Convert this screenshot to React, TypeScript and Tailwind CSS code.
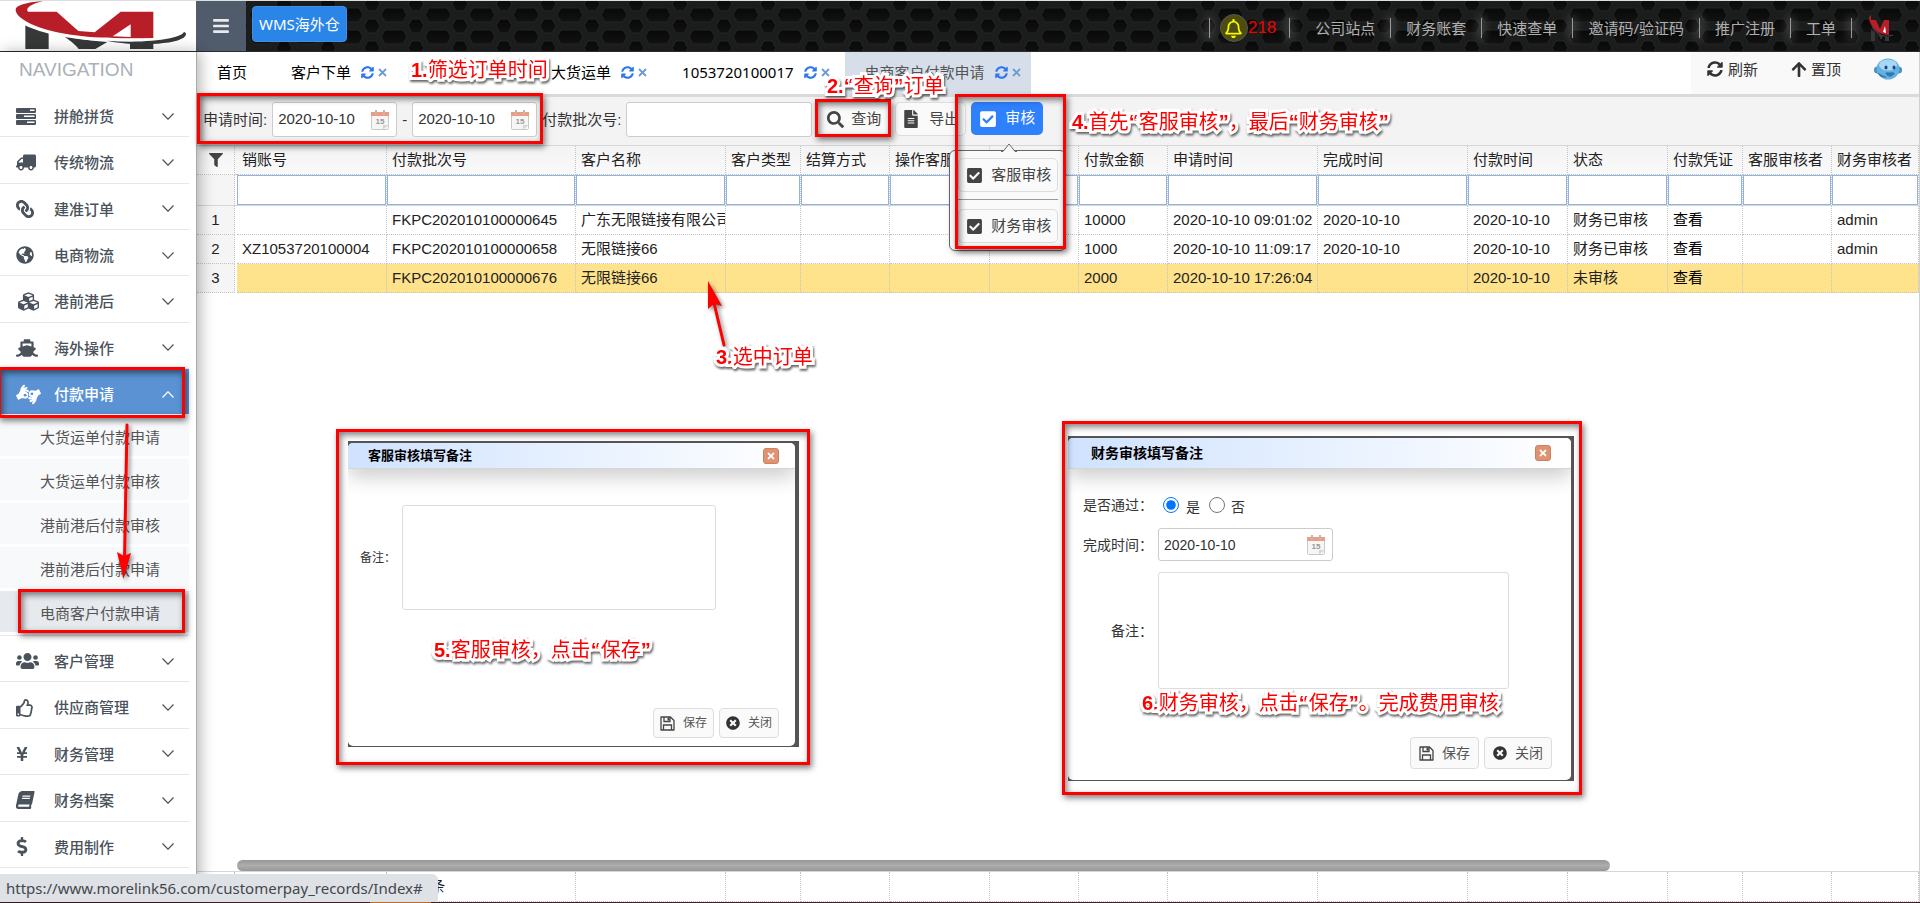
import React from "react";
import type { IconType } from "react-icons";
import {
  FaAmericanSignLanguageInterpreting,
  FaArrowUp,
  FaBars,
  FaBook,
  FaCheckSquare,
  FaCubes,
  FaDollarSign,
  FaFileAlt,
  FaFilter,
  FaGlobeAmericas,
  FaLink,
  FaRegBell,
  FaRegThumbsUp,
  FaSearch,
  FaShip,
  FaSyncAlt,
  FaTimes,
  FaTimesCircle,
  FaTruck,
  FaUsers,
  FaYenSign,
} from "react-icons/fa";

type MenuItem = { label: string; icon: IconType | typeof TasksIcon; iconClass?: string };

function TasksIcon({ className }: { className?: string }) {
  return (
    <svg viewBox="0 0 20 17" className={className} fill="currentColor" aria-hidden="true">
      <path d="M1 0h18a1 1 0 0 1 1 1v3a1 1 0 0 1-1 1H1a1 1 0 0 1-1-1V1a1 1 0 0 1 1-1zm13 1.500v1.500h4.500V1.500z" fillRule="evenodd" />
      <path d="M1 6h18a1 1 0 0 1 1 1v3a1 1 0 0 1-1 1H1a1 1 0 0 1-1-1V7a1 1 0 0 1 1-1zm7 1.500v1.500h10.500V7.500z" fillRule="evenodd" />
      <path d="M1 12h18a1 1 0 0 1 1 1v3a1 1 0 0 1-1 1H1a1 1 0 0 1-1-1v-3a1 1 0 0 1 1-1zm10 1.500v1.500h7.500v-1.500z" fillRule="evenodd" />
    </svg>
  );
}

function FloppyIcon({ className }: { className?: string }) {
  return (
    <svg viewBox="0 0 15 15" className={className} fill="none" stroke="currentColor" strokeWidth="1.300" aria-hidden="true">
      <path d="M1 1h9.500L14 4.500V14H1z" strokeLinejoin="round" />
      <path d="M3.500 14V9h8v5" />
      <path d="M4 1v4.500h6V1" />
      <path d="M7.500 1.500h2v3h-2z" fill="currentColor" stroke="none" />
    </svg>
  );
}

const menuTop: MenuItem[] = [
  { label: "拼舱拼货", icon: TasksIcon, iconClass: "w-5 h-[17px]" },
  { label: "传统物流", icon: FaTruck, iconClass: "w-5 h-[17px] -scale-x-100" },
  { label: "建准订单", icon: FaLink, iconClass: "w-[18px] h-[18px] -scale-x-100" },
  { label: "电商物流", icon: FaGlobeAmericas, iconClass: "w-[18px] h-[18px]" },
  { label: "港前港后", icon: FaCubes, iconClass: "w-[25px] h-[21px]" },
  { label: "海外操作", icon: FaShip, iconClass: "w-[22px] h-5" },
];

const subMenu = ["大货运单付款申请", "大货运单付款审核", "港前港后付款审核", "港前港后付款申请", "电商客户付款申请"];

const menuBottom: MenuItem[] = [
  { label: "客户管理", icon: FaUsers, iconClass: "w-[23px] h-5" },
  { label: "供应商管理", icon: FaRegThumbsUp, iconClass: "w-[18px] h-[18px]" },
  { label: "财务管理", icon: FaYenSign, iconClass: "w-3 h-4" },
  { label: "财务档案", icon: FaBook, iconClass: "w-[18px] h-[18px] -skew-x-12" },
  { label: "费用制作", icon: FaDollarSign, iconClass: "w-3 h-[19px]" },
];

const columns = [
  { title: "销账号", width: "w-[150px]" },
  { title: "付款批次号", width: "w-[189px]" },
  { title: "客户名称", width: "w-[150px]" },
  { title: "客户类型", width: "w-[75px]" },
  { title: "结算方式", width: "w-[89px]" },
  { title: "操作客服", width: "w-[100px]" },
  { title: "", width: "w-[89px]" },
  { title: "付款金额", width: "w-[89px]" },
  { title: "申请时间", width: "w-[150px]" },
  { title: "完成时间", width: "w-[150px]" },
  { title: "付款时间", width: "w-[100px]" },
  { title: "状态", width: "w-[100px]" },
  { title: "付款凭证", width: "w-[75px]" },
  { title: "客服审核者", width: "w-[89px]" },
  { title: "财务审核者", width: "w-[87px]" },
];

const rows = [
  ["", "FKPC202010100000645", "广东无限链接有限公司", "", "", "", "", "10000", "2020-10-10 09:01:02", "2020-10-10", "2020-10-10", "财务已审核", "查看", "", "admin"],
  ["XZ1053720100004", "FKPC202010100000658", "无限链接66", "", "", "", "", "1000", "2020-10-10 11:09:17", "2020-10-10", "2020-10-10", "财务已审核", "查看", "", "admin"],
  ["", "FKPC202010100000676", "无限链接66", "", "", "", "", "2000", "2020-10-10 17:26:04", "", "2020-10-10", "未审核", "查看", "", ""],
];

function Chevron({ up = false }: { up?: boolean }) {
  return (
    <svg viewBox="0 0 12 7" className="h-[7px] w-3" fill="none" stroke="currentColor" strokeWidth="1.200" aria-hidden="true">
      <path d={up ? "M0.500 6.500 6 0.800l5.500 5.700" : "M0.500 0.500 6 6.200 11.500 0.500"} />
    </svg>
  );
}

function Logo() {
  return (
    <svg viewBox="0 0 588 153" className="h-[51px] w-[196px]" role="img" aria-label="Morelink">
      <path d="M130 0C90 3 50 10 47 25c-2 16 22 34 55 48 70 30 180 40 298 39h60V32h-98l-78 62-49-4-65-58H84C76 22 90 10 130 0z" fill="#b81e28" />
      <path d="M338 106l54-36v38z" fill="#fff" />
      <path d="M76 68l70 26v50H76zM186 102c45 12 90 18 136 21l-36 21h-50c-14-18-30-28-50-42zM390 125l70-1v20h-70z" fill="#373939" />
      <path d="M60 62c80 42 190 58 340 55 70 0 120-6 146-20" fill="none" stroke="#fff" strokeWidth="8" />
      <path d="M320 119c70 6 140 3 190-7 26-6 38-12 42-19 6 2 8 6 4 12-10 14-50 22-100 24-50 2-100-2-136-10z" fill="#373939" />
    </svg>
  );
}

function HexBackground() {
  return (
    <svg className="absolute inset-0 h-full w-full" aria-hidden="true">
      <defs>
        <linearGradient id="hexFill" x1="0" y1="0" x2="0" y2="1">
          <stop offset="0" stopColor="#070807" />
          <stop offset="1" stopColor="#111211" />
        </linearGradient>
        <pattern id="hex" width="44" height="22" patternUnits="userSpaceOnUse">
          <rect width="44" height="22" fill="#1b1c1c" />
          <g fill="url(#hexFill)" stroke="#222323" strokeWidth="1">
            <path d="M9 14l4-7h18l4 7-4 7H13z" />
            <path d="M-8 3l4-7h8l4 7-4 7h-8z" />
            <path d="M36 3l4-7h8l4 7-4 7h-8z" />
            <path d="M-8 25l4-7h8l4 7-4 7h-8z" />
            <path d="M36 25l4-7h8l4 7-4 7h-8z" />
          </g>
        </pattern>
      </defs>
      <rect width="100%" height="100%" fill="url(#hex)" />
    </svg>
  );
}

function CalendarIcon() {
  return (
    <svg viewBox="0 0 18 20" className="h-5 w-[18px] shrink-0" aria-hidden="true">
      <rect x="0.500" y="2.500" width="17" height="17" rx="1" fill="#f6f6f6" stroke="#c9c9c9" />
      <path d="M0 2h18v4H0z" fill="#f09a80" />
      <path d="M4 0h2v5H4zM12 0h2v5h-2z" fill="#b9b9b9" />
      <path d="M12 19.500V15h5.500z" fill="#d5d5d5" />
      <text x="9" y="14" textAnchor="middle" fontSize="8" fontWeight="bold" fontFamily="Liberation Sans" fill="#999">15</text>
    </svg>
  );
}

function DateField({ label, className }: { label: string; className: string }) {
  return (
    <span className={`flex items-center rounded-[3px] border border-[#ccc] bg-white pr-[7px] pl-[5px] ${className}`}>
      <input aria-label={label} defaultValue="2020-10-10" className="w-full min-w-0 text-[#333] outline-none" />
      <CalendarIcon />
    </span>
  );
}

function SideItem({ item }: { item: MenuItem }) {
  const Icon = item.icon;
  return (
    <li className="flex border-b border-[#e4e8eb]">
      <a href="#" className="flex flex-1 items-center pt-[5px] pr-[15px] pl-4 font-medium">
        <span className="flex w-[38px] items-center">
          <Icon className={item.iconClass} />
        </span>
        <span className="flex-1">{item.label}</span>
        <Chevron />
      </a>
    </li>
  );
}

function Sidebar() {
  return (
    <nav className="z-10 flex w-[197px] shrink-0 flex-col overflow-hidden border-r border-[#aaa] bg-white pr-[7px] text-[15px] text-[#4a525b] shadow-[3px_0_14px_rgba(0,0,0,0.3)]">
      <h2 className="h-[39px] pt-1 pl-[19px] font-['Liberation_Sans'] text-[19px] text-[#a9b0b8]">NAVIGATION</h2>
      <ul className="grid h-[278px] shrink-0 auto-rows-fr">
        {menuTop.map((m) => (
          <SideItem key={m.label} item={m} />
        ))}
      </ul>
      <a href="#" className="flex h-[45px] shrink-0 items-center bg-[#5a92d3] pt-1.5 pr-[15px] pl-4 font-medium text-white">
        <span className="flex w-[38px]">
          <FaAmericanSignLanguageInterpreting className="h-[21px] w-[25px]" />
        </span>
        <span className="flex-1">付款申请</span>
        <Chevron up />
      </a>
      <ul className="grid h-[222px] shrink-0 auto-rows-fr border-b border-[#e4e8eb] pt-px text-[#555]">
        {subMenu.map((s, i) => (
          <li key={s} className="flex pb-[3px]">
            <a href="#" className={`flex flex-1 items-center pt-1 pl-10 ${i === 4 ? "bg-[#e6e9ed]" : "bg-[#f7f9fb]"}`}>
              {s}
            </a>
          </li>
        ))}
      </ul>
      <ul className="grid h-[232px] shrink-0 auto-rows-fr">
        {menuBottom.map((m) => (
          <SideItem key={m.label} item={m} />
        ))}
      </ul>
    </nav>
  );
}

function HeaderLink({ children }: { children: React.ReactNode }) {
  return (
    <a href="#" className="px-[15px]">
      {children}
    </a>
  );
}

function Divider() {
  return <span className="h-5 w-px bg-[#999] shadow-[0_0_10px_2px_rgba(255,255,255,0.25)]" />;
}

function Header() {
  return (
    <header className="flex h-[52px] shrink-0 border-t border-b border-t-[#dcdfe0] border-b-[#2b2b2b]">
      <div className="w-[196px] shrink-0 bg-white">
        <Logo />
      </div>
      <div className="relative flex flex-1 bg-[#151616]">
        <HexBackground />
        <button aria-label="菜单" className="relative flex w-[50px] items-center justify-center bg-[#505b6c] text-[#e8eaec]">
          <FaBars className="h-[18px] w-[18px]" />
        </button>
        <button className="relative mt-[5px] ml-1.5 h-9 rounded border border-[#3f8fe6] bg-[#2a85e8] px-1.5 text-[15px] text-white">WMS海外仓</button>
        <div className="relative ml-auto flex items-center pt-1 pr-[26px] text-[15px] text-[#b0b0b0]">
          <Divider />
          <a href="#" className="ml-2.5 flex items-center pr-[13px] font-['Liberation_Sans'] text-[17px] text-[#f00000]">
            <span className="flex h-7 w-7 items-center justify-center rounded-full border border-[#555] bg-[#4d4d12]">
              <FaRegBell className="h-[19px] w-[19px] text-[#f8f800]" />
            </span>
            218
          </a>
          <Divider />
          <span className="pl-2.5"><HeaderLink>公司站点</HeaderLink></span>
          <Divider />
          <HeaderLink>财务账套</HeaderLink>
          <Divider />
          <HeaderLink>快速查单</HeaderLink>
          <Divider />
          <HeaderLink>邀请码/验证码</HeaderLink>
          <Divider />
          <HeaderLink>推广注册</HeaderLink>
          <Divider />
          <HeaderLink>工单</HeaderLink>
          <Divider />
          <svg viewBox="0 0 26 28" className="ml-4 h-7 w-[26px]" aria-hidden="true">
            <path d="M3 1C0 3 1 7 4 12c3 5 9 9 17 9V6h-5l-4 9L8 6H3z" fill="#b81e28" />
            <path d="M15 18l2-6 1 7z" fill="#fff" />
            <path d="M3 15l4 4v8H3zM10 20l5 2-2 4zM17 23h4v4h-4z" fill="#363838" />
            <path d="M4 13c5 8 13 11 21 8" fill="none" stroke="#444" />
          </svg>
        </div>
      </div>
    </header>
  );
}

function Tab({ label, active = false }: { label: string; active?: boolean }) {
  return (
    <div className={`flex items-center pr-2.5 pb-0.5 pl-5 ${active ? "bg-[#d6dfe9] text-[#555]" : "mr-[5px]"}`}>
      <a href="#">{label}</a>
      <button aria-label="刷新标签" className="ml-2.5 text-[#2f74f0]">
        <FaSyncAlt className="h-[13px] w-[13px]" />
      </button>
      <button aria-label="关闭标签" className="ml-1 text-[#6f9bd0]">
        <svg viewBox="0 0 9 9" className="h-[9px] w-[9px]" stroke="currentColor" strokeWidth="1.800"><path d="M1 1l7 7M8 1L1 8" /></svg>
      </button>
    </div>
  );
}

function Tabs() {
  return (
    <div className="flex h-[45px] shrink-0 border-b-[3px] border-[#dadada] bg-white text-[15px] text-black">
      <a href="#" className="flex items-center pr-6 pb-0.5 pl-5">首页</a>
      <Tab label="客户下单" />
      <span className="w-[129px]" />
      <Tab label="大货运单" />
      <Tab label="1053720100017" />
      <Tab label="电商客户付款申请" active />
      <div className="ml-auto flex items-center bg-[#f9f9f9] pr-[17px] pb-2 pl-4 text-[#333]">
        <button className="flex items-center gap-[5px]"><FaSyncAlt className="h-4 w-4" />刷新</button>
        <button className="ml-[33px] flex items-center gap-1"><FaArrowUp className="h-[17px] w-4" />置顶</button>
        <svg viewBox="0 0 28 22" className="ml-[33px] h-[22px] w-7" aria-hidden="true">
          <circle cx="3.500" cy="12" r="3.500" fill="#3f8fc4" />
          <circle cx="24.500" cy="12" r="3.500" fill="#3f8fc4" />
          <ellipse cx="14" cy="11" rx="11.500" ry="10.500" fill="#64b1df" />
          <ellipse cx="14" cy="7" rx="9" ry="5.500" fill="#a6d8f3" />
          <ellipse cx="12" cy="9.500" rx="1.500" ry="2" fill="#243f94" />
          <ellipse cx="20" cy="9.500" rx="1.500" ry="2" fill="#243f94" />
          <path d="M12 15h8c-1 4-7 4-8 0zM4 15c2 3 5 4 8 4" fill="#2c7fb5" stroke="#276f9f" />
        </svg>
      </div>
    </div>
  );
}

const toolButton = "flex h-[34px] items-center rounded-[5px] border border-[#ddd] bg-[#fafafa] text-[#444]";

function Toolbar() {
  return (
    <div className="flex h-[49px] shrink-0 items-start gap-[5px] border-b border-[#d6d6d6] bg-[#f3f3f3] pt-[5px] pl-1.5 text-[15px] text-[#333]">
      <span className="leading-[35px]">申请时间:</span>
      <DateField label="开始时间" className="h-[35px] w-[125px]" />
      <span className="leading-[35px]">-</span>
      <DateField label="结束时间" className="h-[35px] w-[125px]" />
      <label htmlFor="batch" className="leading-[35px]">付款批次号:</label>
      <input id="batch" className="h-[35px] w-[186px] rounded-[3px] border border-[#ccc] bg-white px-1" />
      <button className={`${toolButton} w-[73px] pl-[9px]`}>
        <FaSearch className="mr-[7px] h-[17px] w-[17px]" />查询
      </button>
      <button className={`${toolButton} w-[71px] overflow-hidden pl-[7px]`}>
        <FaFileAlt className="mr-2.5 h-[18px] w-4 shrink-0" /><span className="whitespace-nowrap">导出</span>
      </button>
      <div className="relative">
        <button className="flex h-[33px] w-[72px] items-center rounded-[5px] bg-[#2e80fd] pl-2 text-white">
          <FaCheckSquare className="mr-2 h-[18px] w-[18px]" />审核
        </button>
        <div className="absolute top-12 -left-[22px] z-20 w-[117px] rounded-md border border-[#666] bg-[#fafafa] py-[7px] pr-[7px] pl-2 shadow-md">
          <svg viewBox="0 0 16 9" className="absolute -top-2 left-[51px] h-[9px] w-4" aria-hidden="true">
            <path d="M0 8.500h2L8 1l6 7.500h2" fill="#f6f6f6" stroke="#666" />
          </svg>
          <button className={`${toolButton} w-full pl-[7px]`}>
            <FaCheckSquare className="mr-2 h-[17px] w-[17px]" />客服审核
          </button>
          <hr className="mt-[7px] mb-[9px] border-[#999]" />
          <button className={`${toolButton} w-full pl-[7px]`}>
            <FaCheckSquare className="mr-2 h-[17px] w-[17px]" />财务审核
          </button>
        </div>
      </div>
    </div>
  );
}

function ColGroup() {
  return (
    <colgroup>
      <col className="w-[38px]" />
      <col className="w-[2px]" />
      {columns.map((c, i) => (
        <col key={i} className={c.width} />
      ))}
    </colgroup>
  );
}

function Grid() {
  return (
    <>
      <table className="w-full table-fixed border-separate border-spacing-0 text-[15px] text-[#222]">
        <ColGroup />
        <thead>
          <tr className="h-[29px] bg-gradient-to-b from-[#f3f3f3] to-[#fafafa]">
            <th className="border-r border-b border-dotted border-[#c4c4c4] p-0">
              <FaFilter className="mx-auto h-3.5 w-3.5 text-[#444]" />
            </th>
            <th className="border-b border-dotted border-[#c4c4c4] p-0" />
            {columns.map((c, i) => (
              <th key={i} className="border-r border-b border-dotted border-[#c4c4c4] p-0 pl-[5px] text-left font-normal whitespace-nowrap">
                {c.title}
              </th>
            ))}
          </tr>
          <tr className="h-[31px]">
            <td className="border-r border-b border-r-[#c4c4c4] border-b-[#d6d6d6] bg-[#f5f5f5] p-0 [border-right-style:dotted]" />
            <td className="border-b border-[#d6d6d6] p-0" />
            {columns.map((c, i) => (
              <td key={i} className="border-r border-b border-r-[#c4c4c4] border-b-[#d6d6d6] p-0 [border-right-style:dotted]">
                <input aria-label={`筛选${c.title}`} className="block h-[30px] w-full border border-[#8fb4e2] bg-white px-1" />
              </td>
            ))}
          </tr>
        </thead>
        <tbody>
          {rows.map((r, ri) => (
            <tr key={ri} className="h-[29px]">
              <th className="border-r border-b border-dotted border-[#c4c4c4] bg-[#f5f5f5] p-0 font-normal">{ri + 1}</th>
              <td className="p-0" />
              {r.map((v, i) => (
                <td
                  key={i}
                  className={`overflow-hidden border-r border-b border-dotted border-[#c4c4c4] p-0 pl-[5px] whitespace-nowrap ${ri === 2 ? "bg-[#ffe28c]" : "bg-white"}`}
                >
                  {i === 12 ? <a href="#" className="text-black">{v}</a> : v}
                </td>
              ))}
            </tr>
          ))}
        </tbody>
      </table>
      <div className="flex-1" />
      <div className="flex pl-10">
        <div className="h-[11px] max-w-[1373px] flex-1 rounded-md bg-gradient-to-b from-[#979797] via-[#adadad] to-[#979797]" />
      </div>
      <table className="w-full table-fixed border-separate border-spacing-0 border-t border-[#d6d6d6] text-[15px] text-[#222]">
        <ColGroup />
        <tbody>
          <tr className="h-[30px]">
            <td className="border-r border-b border-dotted border-[#c4c4c4] p-0" />
            <td className="border-b border-dotted border-[#c4c4c4] p-0" />
            {columns.map((_, i) => (
              <td key={i} className="border-r border-b border-dotted border-[#c4c4c4] p-0 pl-[5px] whitespace-nowrap">
                {i === 1 ? "总共3条" : ""}
              </td>
            ))}
          </tr>
        </tbody>
      </table>
    </>
  );
}

const frame = "pointer-events-none absolute z-30 border-3 border-[#ff0000] shadow-[2px_3px_6px_rgba(0,0,0,0.5),inset_2px_3px_6px_rgba(0,0,0,0.5)]";

function Note({ text, className }: { text: string; className: string }) {
  const parts = text.match(/[“”0-9.]+|[^“”0-9.]+/g) ?? [];
  return (
    <p className={`pointer-events-none absolute z-40 whitespace-nowrap leading-6 text-[#ff0000] [-webkit-text-stroke:6px_white] [paint-order:stroke_fill] [stroke-linejoin:round] drop-shadow-[1px_2px_1px_rgba(0,0,0,0.6)] ${className}`}>
      {parts.map((p, i) => (
        <span key={i} className={/[“”0-9.]/.test(p) ? "font-bold" : "font-normal"}>{p}</span>
      ))}
    </p>
  );
}

function DialogButtons({ className }: { className: string }) {
  const cls = "flex items-center gap-2 rounded border border-[#ddd] bg-[#fafafa] text-[#555]";
  return (
    <>
      <button className={`${cls} ${className}`}><FloppyIcon className="h-[15px] w-[15px] text-[#444]" />保存</button>
      <button className={`${cls} ${className}`}><FaTimesCircle className="h-3.5 w-3.5 text-[#333]" />关闭</button>
    </>
  );
}

function DialogHeader({ title, className }: { title: string; className: string }) {
  return (
    <div className={`flex shrink-0 items-center justify-between border-b border-[#d5d5d5] bg-gradient-to-r from-[#cfe2ff] to-white font-bold text-black shadow-[0_8px_20px_rgba(0,0,0,0.2)] ${className}`}>
      <h3>{title}</h3>
      <button aria-label="关闭" className="flex h-4 w-4 items-center justify-center rounded-[3px] border border-[#cf7f60] bg-[#df9372] text-white">
        <FaTimes className="h-2.5 w-2.5" />
      </button>
    </div>
  );
}

function ServiceDialog() {
  return (
    <section className="absolute top-[441px] left-[348px] flex h-[306px] w-[451px] bg-[#555] pt-0.5 pr-1 pb-px">
      <div className="flex flex-1 flex-col overflow-hidden rounded-[5px] bg-white text-xs text-[#333]">
        <DialogHeader title="客服审核填写备注" className="h-[26px] pr-4 pl-5 text-[13px]" />
        <div className="mt-9 flex items-center pl-3">
          <label htmlFor="remark1" className="w-[42px]">备注：</label>
          <textarea id="remark1" className="h-[105px] w-[314px] resize-none rounded-[3px] border border-[#ddd]" />
        </div>
        <div className="mt-auto mr-4 mb-2 flex h-[30px] justify-end gap-[5px]">
          <DialogButtons className="px-1.5" />
        </div>
      </div>
    </section>
  );
}

function FinanceDialog() {
  return (
    <section className="absolute top-[436px] left-[1068px] flex h-[345px] w-[506px] bg-[#555] pt-0.5 pr-[3px] pb-px">
      <div className="flex flex-1 flex-col overflow-hidden rounded-[5px] bg-white text-sm text-[#333]">
        <DialogHeader title="财务审核填写备注" className="h-[31px] pr-5 pl-[23px]" />
        <div className="mt-6 flex h-6 items-center pl-[15px]">
          <span className="w-20">是否通过：</span>
          <input id="pass-yes" name="pass" type="radio" defaultChecked className="h-4 w-4" />
          <label htmlFor="pass-yes" className="mt-1 mr-[9px] ml-[7px]">是</label>
          <input id="pass-no" name="pass" type="radio" className="h-4 w-4" />
          <label htmlFor="pass-no" className="mt-1 ml-1.5">否</label>
        </div>
        <div className="mt-[11px] flex items-center pl-[15px]">
          <span className="w-[75px]">完成时间：</span>
          <DateField label="完成时间" className="h-[33px] w-[175px]" />
        </div>
        <div className="mt-[11px] flex items-center pl-[15px]">
          <label htmlFor="remark2" className="w-[75px] pl-7 whitespace-nowrap">备注：</label>
          <textarea id="remark2" className="h-[117px] w-[351px] resize-none rounded-[3px] border border-[#ddd]" />
        </div>
        <div className="mt-auto mr-[19px] mb-[11px] flex h-8 justify-end gap-[5px]">
          <DialogButtons className="px-2" />
        </div>
      </div>
    </section>
  );
}

export default function App() {
  return (
    <div className="relative flex h-screen flex-col overflow-hidden bg-white font-['Noto_Sans','Noto_Sans_CJK_SC',sans-serif]">
      <Header />
      <div className="flex min-h-0 flex-1 border-b border-[#3a2028]">
        <Sidebar />
        <main className="flex min-w-0 flex-1 flex-col border-r border-[#d0d0d0] font-['Liberation_Sans','Noto_Sans_CJK_SC',sans-serif]">
          <div className="flex flex-col font-['Noto_Sans','Noto_Sans_CJK_SC',sans-serif]">
            <Tabs />
          </div>
          <Toolbar />
          <Grid />
        </main>
      </div>

      <div className="absolute bottom-px left-0 z-20 h-7 w-[438px] rounded-tr-md bg-[#dee1e6] pl-1.5 font-['Noto_Sans'] text-[15px] leading-[29px] whitespace-nowrap text-[#44474a]">
        https://www.morelink56.com/customerpay_records/Index#
      </div>
      <div className="absolute bottom-0 left-[370px] z-20 h-px w-[61px] bg-[#c06a2a]" />

      <div className="font-['Liberation_Sans','Noto_Sans_CJK_SC',sans-serif]">
        <ServiceDialog />
        <FinanceDialog />

        <div className={`${frame} top-[93px] left-[197px] h-[51px] w-[346px]`} />
        <div className={`${frame} top-[99px] left-[815px] h-[38px] w-[76px]`} />
        <div className={`${frame} top-[94px] left-[955px] h-[155px] w-[111px]`} />
        <div className={`${frame} top-[367px] -left-[2px] h-[51px] w-[187px]`} />
        <div className={`${frame} top-[589px] left-[18px] h-[44px] w-[167px]`} />
        <div className={`${frame} top-[429px] left-[336px] h-[336px] w-[474px]`} />
        <div className={`${frame} top-[421px] left-[1062px] h-[374px] w-[520px]`} />

        <svg className="pointer-events-none absolute top-[420px] left-[110px] z-30 h-[165px] w-[30px] drop-shadow-[2px_2px_2px_rgba(0,0,0,0.5)]" aria-hidden="true">
          <path d="M17 5L14.500 140" stroke="#f00" strokeWidth="3" strokeLinecap="round" />
          <path d="M13.500 159L7 132l7 4 7-3z" fill="#f00" />
        </svg>
        <svg className="pointer-events-none absolute top-[275px] left-[700px] z-30 h-[80px] w-[36px] drop-shadow-[2px_2px_2px_rgba(0,0,0,0.5)]" aria-hidden="true">
          <path d="M24 70L14 28" stroke="#f00" strokeWidth="3" strokeLinecap="round" />
          <path d="M8 6L8 34l6-5 8 2z" fill="#f00" />
        </svg>

        <Note text="1.筛选订单时间" className="top-[58px] left-[411px] text-xl" />
        <Note text="2.“查询”订单" className="top-[74px] left-[827px] text-xl" />
        <Note text="3.选中订单" className="top-[345px] left-[716px] text-xl" />
        <Note text="4.首先“客服审核”，最后“财务审核”" className="top-[110px] left-[1072px] text-xl" />
        <Note text="5.客服审核，点击“保存”" className="top-[638px] left-[434px] text-xl" />
        <Note text="6.财务审核，点击“保存”。完成费用审核" className="top-[691px] left-[1142px] text-xl" />
      </div>
    </div>
  );
}
